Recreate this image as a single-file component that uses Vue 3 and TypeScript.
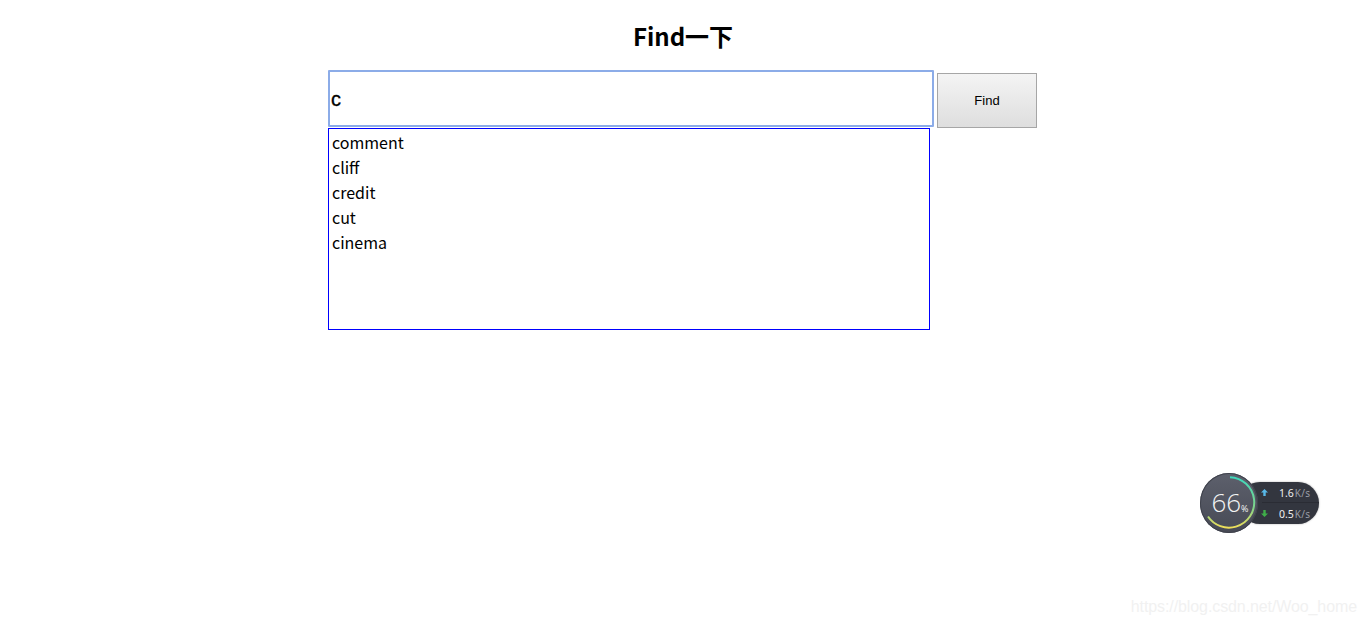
<script setup lang="ts">
const words: string[] = ['comment', 'cliff', 'credit', 'cut', 'cinema']
</script>

<template>
  <div class="page">
    <h1 class="title">Find一下</h1>
    <div class="search">
      <div class="row">
        <div class="input">c</div>
        <button class="btn" type="button">Find</button>
      </div>
      <ul class="list">
        <li v-for="w in words" :key="w">{{ w }}</li>
      </ul>
    </div>

    <div class="widget">
      <div class="pill">
        <div class="line first"><svg class="arrow" width="7" height="7" viewBox="0 0 7 7"><path d="M3.5 0 7 3.6H4.7V7H2.3V3.6H0Z" fill="#58b8e8"/></svg><b>1.6</b><i>K/s</i></div>
        <div class="line"><svg class="arrow" width="7" height="7" viewBox="0 0 7 7"><path d="M3.5 7 7 3.4H4.7V0H2.3V3.4H0Z" fill="#3fae49"/></svg><b>0.5</b><i>K/s</i></div>
      </div>
      <div class="dial">
        <svg class="ring" width="58" height="60" viewBox="0 0 58 60">
          <defs>
            <linearGradient id="arcGrad" x1="0" y1="0" x2="0" y2="1">
              <stop offset="0" stop-color="#3fd8bc"/>
              <stop offset="0.6" stop-color="#7fd48a"/>
              <stop offset="1" stop-color="#eede5a"/>
            </linearGradient>
          </defs>
          <path d="M30 4.2A25.2 25.2 0 0 1 36 53.6 25.2 25.2 0 0 1 8 43.5" fill="none" stroke="url(#arcGrad)" stroke-width="2"/>
        </svg>
        <span class="pct">66<small>%</small></span>
      </div>
    </div>

    <div class="mark">https://blog.csdn.net/Woo_home</div>
  </div>
</template>

<style>
html, body { margin: 0; background: #fff; }
</style>

<style scoped>
.page {
  position: relative;
  height: 625px;
  width: 1366px;
  overflow: hidden;
  font-family: "Noto Sans CJK SC", "Noto Sans", sans-serif;
  color: #000;
}
.title {
  margin: 0;
  padding-top: 18px;
  height: 70px;
  box-sizing: border-box;
  text-align: center;
  font-size: 24px;
  line-height: 35px;
  font-weight: 700;
}
.search {
  width: 709px;
  margin-left: 328px;
}
.row {
  display: flex;
  align-items: flex-start;
  gap: 3px;
}
.input {
  width: 606px;
  height: 57px;
  box-sizing: border-box;
  border: 2px solid #8cace8;
  border-radius: 1px;
  padding-left: 1px;
  font: 400 20px/54px "Liberation Sans", sans-serif;
  -webkit-text-stroke: 0.3px #000;
}
.btn {
  width: 100px;
  height: 55px;
  margin-top: 3px;
  box-sizing: border-box;
  border: 1px solid #a6a6a6;
  background: linear-gradient(#f4f4f4, #dedede);
  font: 13px "Liberation Sans", sans-serif;
  color: #000;
  padding: 0;
}
.list {
  list-style: none;
  margin: 0;
  padding: 1px 3px;
  width: 602px;
  height: 202px;
  box-sizing: border-box;
  border: 1px solid #00f;
  font-size: 16px;
  line-height: 25px;
}
.widget {
  position: absolute;
  left: 1200px;
  top: 473px;
  width: 120px;
  height: 60px;
}
.pill {
  position: absolute;
  left: 39px;
  top: 9px;
  width: 80px;
  height: 42px;
  box-sizing: border-box;
  padding-left: 23px;
  border-radius: 21px;
  background: #33363f;
  box-shadow: 0 0 2px rgba(0, 0, 0, 0.35);
  font-family: "Noto Sans", sans-serif;
}
.line {
  display: flex;
  align-items: center;
  height: 21px;
  font-size: 10.5px;
  color: #f0f0f0;
}
.line.first { box-shadow: inset 0 -1px 0 #2a2c34; }
.line b { font-weight: 400; margin-left: 11px; margin-right: 1px; }
.line i { font-style: normal; color: #9a9da6; font-size: 10px; letter-spacing: 0.2px; }
.arrow { flex: none; margin-left: -1px; }
.dial {
  position: absolute;
  left: 0;
  top: 0;
  width: 58px;
  height: 60px;
  border-radius: 50%;
  background: linear-gradient(#5d606c, #474a55);
  box-shadow: inset 0 0 0 1px #3f424c;
  display: flex;
  align-items: center;
  justify-content: center;
  padding-bottom: 3px;
  padding-left: 2px;
  box-sizing: border-box;
}
.ring { position: absolute; left: 0; top: 0; }
.pct {
  position: relative;
  font: 300 26px/1 "Open Sans", sans-serif;
  color: #f4f4f4;
}
.pct small { font-size: 9px; font-weight: 400; }
.mark {
  position: absolute;
  right: 9px;
  top: 597px;
  font: 16px/20px "Liberation Sans", sans-serif;
  letter-spacing: -0.1px;
  color: #f1f1f1;
  white-space: nowrap;
}
</style>
